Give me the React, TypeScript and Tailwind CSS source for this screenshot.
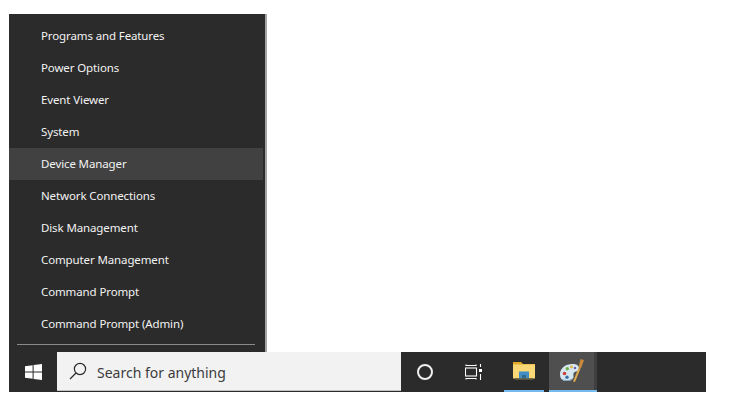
const items = [
  "Programs and Features",
  "Power Options",
  "Event Viewer",
  "System",
  "Device Manager",
  "Network Connections",
  "Disk Management",
  "Computer Management",
  "Command Prompt",
  "Command Prompt (Admin)",
];

function WinLogo() {
  return (
    <svg width="17" height="16" viewBox="0 0 17 16" fill="#fff">
      <path d="M0 2.3 7.6 1.2V7.5H0Z" />
      <path d="M8.6 1.1 17 0V7.5H8.6Z" />
      <path d="M0 8.5H7.6V14.8L0 13.7Z" />
      <path d="M8.6 8.5H17V16L8.6 14.9Z" />
    </svg>
  );
}

function SearchIcon() {
  return (
    <svg width="18" height="18" viewBox="0 0 18 18" fill="none" stroke="#2b2b2b" strokeWidth="1.2">
      <circle cx="11" cy="7" r="5.6" />
      <path d="M7 11 1 17" />
    </svg>
  );
}

function TaskView() {
  return (
    <svg width="17" height="16" viewBox="0 0 17 16" fill="none" stroke="#fff" strokeWidth="1.1">
      <path d="M1 0.5V1.5H11V0.5" />
      <rect x="0.5" y="4" width="11" height="8" />
      <path d="M1 15.5V14.5H11V15.5" />
      <path d="M15.5 0V3M15.5 10V16" />
      <rect x="14" y="5" width="3" height="3" fill="#fff" stroke="none" />
    </svg>
  );
}

function Folder() {
  return (
    <svg width="23" height="21" viewBox="0 0 23 21">
      <path d="M0 1H8L10 3H22V6H0Z" fill="#e3a92b" />
      <rect x="0" y="3.5" width="22" height="14" fill="#fbd876" />
      <path d="M6 17.5V10.5H16V17.5H13.5V14H8.5V17.5Z" fill="#3f8cc6" />
      <rect x="8.5" y="14" width="5" height="3.5" fill="#2a6a98" />
      <rect x="2" y="17.5" width="18" height="1.5" fill="#55523e" />
    </svg>
  );
}

function Palette() {
  return (
    <svg width="26" height="26" viewBox="0 0 26 26">
      <path d="M1 16C1 10 7 6 13 6C18 6 21 8 20 11.5C19.3 14 15 13 14.5 15.5C14 18 15.5 19 13.5 21C11 23.5 6 23.5 3.5 22C1.5 20.8 1 18.5 1 16Z" fill="#d6e6f1" />
      <path d="M3 21C6 22.5 10 22.5 13 20.5L13.5 21C11 23.5 6 23.5 3.5 22Z" fill="#7fa6c4" />
      <circle cx="5.5" cy="15.5" r="1.8" fill="#c8443a" />
      <circle cx="8.3" cy="10.8" r="1.7" fill="#6fae45" />
      <circle cx="12.5" cy="9" r="1.4" fill="#e3b23c" />
      <circle cx="8" cy="19.3" r="1.7" fill="#3b6fa8" />
      <circle cx="16" cy="10" r="1.2" fill="#6f5aa8" />
      <path d="M14 23.5 19.5 10 21.5 10.8 16 24Z" fill="#dca850" />
      <path d="M19.5 9.5 21.5 1 25 2 22 10.5Z" fill="#c98a3a" />
    </svg>
  );
}

export default function App() {
  return (
    <div className="w-[742px] h-[405px] bg-white pt-[14px] pl-[9px] font-['Noto_Sans','Open_Sans',sans-serif]">
      <div className="w-[258px] h-[338px] bg-[#2b2b2b] border-r-2 border-[#a3a3a3] pt-[6px] flex flex-col">
        <ul className="flex flex-col">
          {items.map((label) => (
            <li
              key={label}
              className={
                "h-[32px] w-[254px] pl-[32px] flex items-center text-[11.5px] tracking-[-0.12px] text-[#f2f2f2] " +
                (label === "Device Manager" ? "bg-[#414141]" : "")
              }
            >
              {label}
            </li>
          ))}
        </ul>
        <div className="ml-[8px] w-[238px] h-px mt-[4px] bg-[#8a8a8a]" />
      </div>
      <div className="w-[697px] h-[40px] bg-[#2b2b2b] flex">
        <div className="w-[48px] flex items-center justify-center pb-[1px]">
          <WinLogo />
        </div>
        <div className="w-[344px] h-[39px] bg-[#f2f2f2] border-b border-[#c4c4c4] flex items-center pl-[12px] gap-[10px]">
          <SearchIcon />
          <span className="text-[14px] text-[#3c3c3c] pt-[2px]">Search for anything</span>
        </div>
        <div className="w-[48px] flex items-center justify-center">
          <div className="w-[16px] h-[16px] rounded-full border-2 border-[#f0f0f0]" />
        </div>
        <div className="w-[48px] flex items-center justify-center">
          <TaskView />
        </div>
        <div className="w-[40px] ml-[7px] flex items-center justify-center border-b-2 border-[#76b9ed]">
          <Folder />
        </div>
        <div className="w-[48px] ml-[5px] flex bg-[#3f3f3f] border-b-2 border-[#76b9ed]">
          <div className="w-[45px] flex items-center justify-center bg-[#4f4f4f]">
            <Palette />
          </div>
        </div>
      </div>
    </div>
  );
}
